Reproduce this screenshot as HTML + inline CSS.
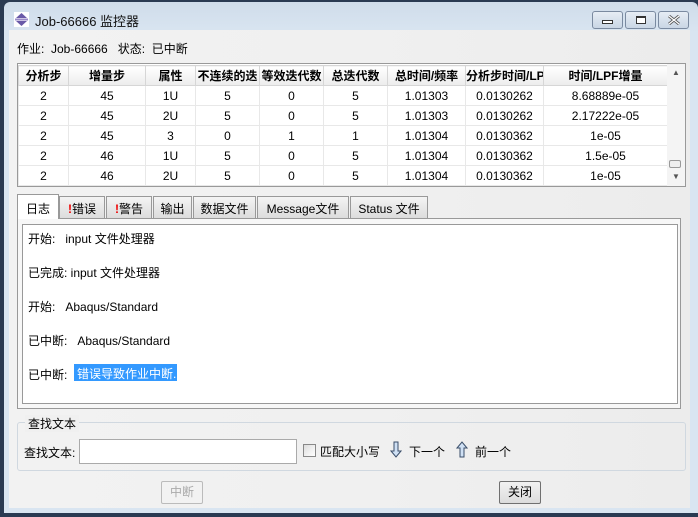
<!DOCTYPE html>
<html><head><meta charset="utf-8"><style>
*{margin:0;padding:0;box-sizing:border-box}
body{width:698px;height:517px;background:#2a3a52;position:relative;overflow:hidden;font-family:"Liberation Sans","Noto Sans CJK SC",sans-serif;font-size:12px;color:#000}
.a{position:absolute}
#frame{left:4px;top:2px;width:694px;height:511px;background:linear-gradient(#cfdcea,#d9e5f1 30px,#d9e5f1);border-radius:6px 6px 0 0}
#client{left:9px;top:30px;width:681px;height:478px;background:linear-gradient(90deg,#f2f2f2,#f0f0f0,#ececec)}
.wb{top:11px;width:31px;height:18px;border:1px solid #7a8aa0;border-radius:3px;background:linear-gradient(#e6edf5,#c9d6e5)}
table{border-collapse:collapse}
td,th{height:20px;text-align:center;border:1px solid #e8e8e8;font-weight:normal;white-space:nowrap;overflow:hidden;padding:0}
th{font-weight:bold;background:linear-gradient(#fff,#ececec);border-color:#d6d6d6}
.tab{top:196px;height:22px;border:1px solid #999;border-bottom:none;background:linear-gradient(#f4f4f4,#dcdcdc);padding:3px 0 0 0;text-align:center;font-size:12px}
.ex{color:#e00;font-weight:bold}
.ln{left:28px}
.btn{top:481px;width:42px;height:23px;border:1px solid #707070;border-radius:2px;background:linear-gradient(#f2f2f2,#dcdcdc);text-align:center;line-height:21px}
</style></head><body>
<div class="a" id="frame"></div>
<div class="a" style="left:14px;top:12px;width:15px;height:15px;background:#fff"></div>
<svg class="a" style="left:14px;top:12px" width="15" height="15"><path d="M7.5 1L13 6H2z M2 9h11L7.5 14z" fill="#6a5aa8"/><rect x="1" y="6.5" width="13" height="2" fill="#9a8ac8"/></svg>
<div class="a" style="left:35px;top:11px;font-size:13px;color:#111">Job-66666 监控器</div>
<div class="a wb" style="left:592px"><div class="a" style="left:9px;top:8px;width:11px;height:4px;border:1px solid #333;background:#fff"></div></div>
<div class="a wb" style="left:625px"><div class="a" style="left:10px;top:4px;width:10px;height:8px;border:1px solid #333;border-top-width:2px;background:#fff"></div></div>
<div class="a wb" style="left:658px"><svg class="a" style="left:9px;top:3px" width="12" height="10"><path d="M1 1L11 9M11 1L1 9" stroke="#555" stroke-width="3"/><path d="M1 1L11 9M11 1L1 9" stroke="#fff" stroke-width="1.2"/></svg></div>
<div class="a" id="client"></div>
<div class="a" style="left:17px;top:40px">作业:&nbsp; Job-66666&nbsp;&nbsp; 状态:&nbsp; 已中断</div>
<div class="a" style="left:17px;top:63px;width:669px;height:124px;border:1px solid #999;background:#fff"></div>
<table class="a" style="left:18px;top:65px;width:649px;table-layout:fixed">
<colgroup><col width="50"><col width="77"><col width="50"><col width="64"><col width="64"><col width="64"><col width="78"><col width="78"><col width="124"></colgroup>
<tr><th>分析步</th><th>增量步</th><th>属性</th><th>不连续的迭</th><th>等效迭代数</th><th>总迭代数</th><th>总时间/频率</th><th>分析步时间/LP</th><th>时间/LPF增量</th></tr>
<tr><td>2</td><td>45</td><td>1U</td><td>5</td><td>0</td><td>5</td><td>1.01303</td><td>0.0130262</td><td>8.68889e-05</td></tr>
<tr><td>2</td><td>45</td><td>2U</td><td>5</td><td>0</td><td>5</td><td>1.01303</td><td>0.0130262</td><td>2.17222e-05</td></tr>
<tr><td>2</td><td>45</td><td>3</td><td>0</td><td>1</td><td>1</td><td>1.01304</td><td>0.0130362</td><td>1e-05</td></tr>
<tr><td>2</td><td>46</td><td>1U</td><td>5</td><td>0</td><td>5</td><td>1.01304</td><td>0.0130362</td><td>1.5e-05</td></tr>
<tr><td>2</td><td>46</td><td>2U</td><td>5</td><td>0</td><td>5</td><td>1.01304</td><td>0.0130362</td><td>1e-05</td></tr>
</table>
<div class="a" style="left:667px;top:64px;width:18px;height:122px;background:#f4f4f4"></div>
<div class="a" style="left:672px;top:68px;font-size:8px;color:#555">▲</div>
<div class="a" style="left:672px;top:172px;font-size:8px;color:#555">▼</div>
<div class="a" style="left:669px;top:160px;width:12px;height:8px;border:1px solid #999;border-radius:2px;background:#eee"></div>
<div class="a" style="left:17px;top:218px;width:664px;height:191px;border:1px solid #999;background:#f7f7f7"></div>
<div class="a tab" style="left:17px;top:194px;width:42px;height:25px;background:#fff;border-color:#999;padding-top:5px">日志</div>
<div class="a tab" style="left:59px;width:46px"><span class="ex">!</span>错误</div>
<div class="a tab" style="left:106px;width:46px"><span class="ex">!</span>警告</div>
<div class="a tab" style="left:153px;width:39px">输出</div>
<div class="a tab" style="left:193px;width:63px">数据文件</div>
<div class="a tab" style="left:257px;width:92px">Message文件</div>
<div class="a tab" style="left:350px;width:78px">Status 文件</div>
<div class="a" style="left:22px;top:224px;width:656px;height:180px;border:1px solid #999;background:#fff"></div>
<div class="a ln" style="top:230px">开始:&nbsp;&nbsp; input 文件处理器</div>
<div class="a ln" style="top:264px">已完成: input 文件处理器</div>
<div class="a ln" style="top:298px">开始:&nbsp;&nbsp; Abaqus/Standard</div>
<div class="a ln" style="top:332px">已中断:&nbsp;&nbsp; Abaqus/Standard</div>
<div class="a ln" style="top:366px">已中断:</div>
<div class="a" style="left:74px;top:364px;width:103px;height:17px;background:#3399ff;color:#fff;padding:1px 0 0 3px">错误导致作业中断.</div>
<div class="a" style="left:17px;top:422px;width:669px;height:49px;border:1px solid #d0d8e0;border-radius:3px"></div>
<div class="a" style="left:25px;top:415px;background:#f0f0f0;padding:0 3px">查找文本</div>
<div class="a" style="left:24px;top:444px">查找文本:</div>
<div class="a" style="left:79px;top:439px;width:218px;height:25px;border:1px solid #aaa;background:#fff"></div>
<div class="a" style="left:303px;top:444px;width:13px;height:13px;border:1px solid #888;background:linear-gradient(135deg,#ddd,#fff)"></div>
<div class="a" style="left:320px;top:443px">匹配大小写</div>
<svg class="a" style="left:390px;top:441px" width="12" height="17"><path d="M4 1h4v9h3L6 16 1 10h3z" fill="#cfe0f4" stroke="#3a4e6a"/></svg>
<div class="a" style="left:409px;top:443px">下一个</div>
<svg class="a" style="left:456px;top:441px" width="12" height="17"><path d="M4 16h4V7h3L6 1 1 7h3z" fill="#cfe0f4" stroke="#3a4e6a"/></svg>
<div class="a" style="left:475px;top:443px">前一个</div>
<div class="a btn" style="left:161px;color:#aaa;border-color:#bbb;background:#f2f2f2">中断</div>
<div class="a btn" style="left:499px">关闭</div>
</body></html>
